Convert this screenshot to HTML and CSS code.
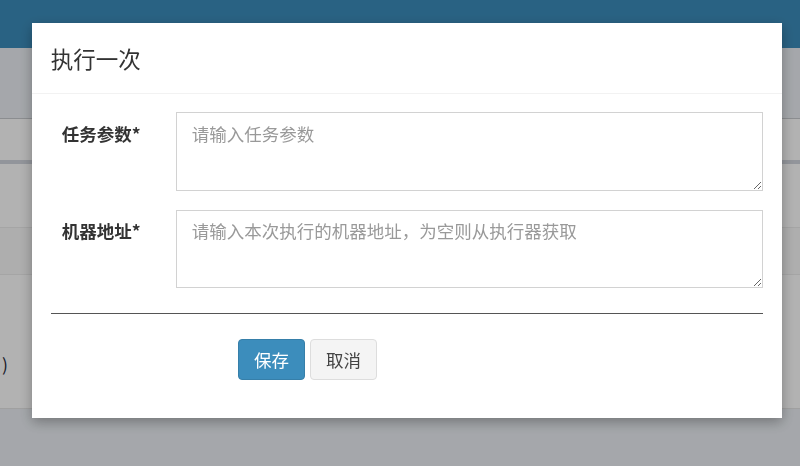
FILE: index.html
```html
<!DOCTYPE html>
<html lang="zh-CN">
<head>
    <meta charset="UTF-8">
    <meta name="viewport" content="width=device-width, initial-scale=1.0">
    <title>任务管理</title>
    <link rel="stylesheet" href="styles.css">
</head>
<body>
    <header class="main-header"></header>

    <!-- Page behind the dialog -->
    <div class="content">
        <div class="box">
            <div class="box-row box-head"></div>
            <div class="box-row first"></div>
            <div class="box-row striped"></div>
            <div class="box-row tall"><span class="cell-text">)</span></div>
        </div>
    </div>

    <!-- Trigger dialog -->
    <div class="modal-backdrop"></div>
    <div class="modal">
        <div class="modal-header">
            <h4 class="modal-title">执行一次</h4>
        </div>
        <div class="modal-body">
            <form id="triggerForm">
                <div class="form-group">
                    <label class="control-label">任务参数*</label>
                    <textarea class="form-control" placeholder="请输入任务参数"></textarea>
                </div>
                <div class="form-group">
                    <label class="control-label">机器地址*</label>
                    <textarea class="form-control" placeholder="请输入本次执行的机器地址，为空则从执行器获取"></textarea>
                </div>
                <hr>
                <div class="form-actions">
                    <button type="submit" class="btn btn-primary">保存</button>
                    <button type="button" class="btn btn-default">取消</button>
                </div>
            </form>
        </div>
    </div>
</body>
</html>
```

FILE: styles.css
```css
* {
    margin: 0;
    padding: 0;
    box-sizing: border-box;
}

body {
    font-family: "Microsoft YaHei", "Noto Sans CJK SC", "Noto Sans", sans-serif;
    font-size: 17.5px;
    color: #333;
    background-color: #ecf0f5;
    min-height: 100vh;
}

.main-header {
    height: 48px;
    background-color: #3c8dbc;
}

.content {
    padding-top: 70px;
}

.box {
    background-color: #fff;
    border-top: 1px solid #c8cbcf;
}

.box-row {
    border-top: 1px solid #f0f0f0;
}

.box-head {
    height: 45px;
    border-top: none;
    border-bottom: 4px solid #d2d6de;
}

.first {
    height: 63px;
    border-top: none;
}

.striped {
    height: 47px;
    background-color: #f9f9f9;
    border-top: 1px solid #ececec;
}

.tall {
    height: 135px;
    border-top: 1px solid #ececec;
    border-bottom: 1px solid #e6e6e6;
    padding: 76px 0 0 2px;
    line-height: 25px;
}

.cell-text {
    color: #1e2a3a;
}

.modal-backdrop {
    position: fixed;
    top: 0;
    left: 0;
    width: 100%;
    height: 100%;
    background-color: rgba(0, 0, 0, 0.3);
}

.modal {
    position: fixed;
    top: 23px;
    left: 32px;
    width: 750px;
    background-color: #fff;
    box-shadow: 0 4px 12px rgba(0, 0, 0, 0.3);
}

.modal-header {
    padding: 18.75px;
    border-bottom: 1px solid #f2f2f2;
}

.modal-title {
    font-size: 22.5px;
    font-weight: normal;
    line-height: 32px;
    color: #333;
}

.modal-body {
    padding: 18.75px;
}

.form-group {
    display: grid;
    grid-template-columns: 106.25px 1fr;
    column-gap: 18.75px;
    margin-bottom: 18.75px;
}

.control-label {
    padding: 8.75px 0 0 11px;
    font-weight: bold;
    line-height: 25px;
    color: #333;
}

.form-control {
    width: 100%;
    height: 78.5px;
    padding: 7.5px 15px;
    border: 1px solid #d2d2d2;
    border-radius: 0;
    font-family: inherit;
    font-size: 17.5px;
    line-height: 25px;
    color: #555;
}

.form-control::placeholder {
    color: #999;
}

hr {
    border: none;
    border-top: 1px solid #555;
    margin: 25px 0;
}

.form-actions {
    display: flex;
    gap: 5px;
    margin-left: 187.25px;
    margin-bottom: 18.75px;
}

.btn {
    padding: 7px 15px;
    border: 1px solid transparent;
    border-radius: 4px;
    font-family: inherit;
    font-size: 17.5px;
    line-height: 25px;
    cursor: pointer;
}

.btn-primary {
    background-color: #3c8dbc;
    border-color: #367fa9;
    color: #fff;
}

.btn-default {
    background-color: #f4f4f4;
    border-color: #ddd;
    color: #444;
}
```
